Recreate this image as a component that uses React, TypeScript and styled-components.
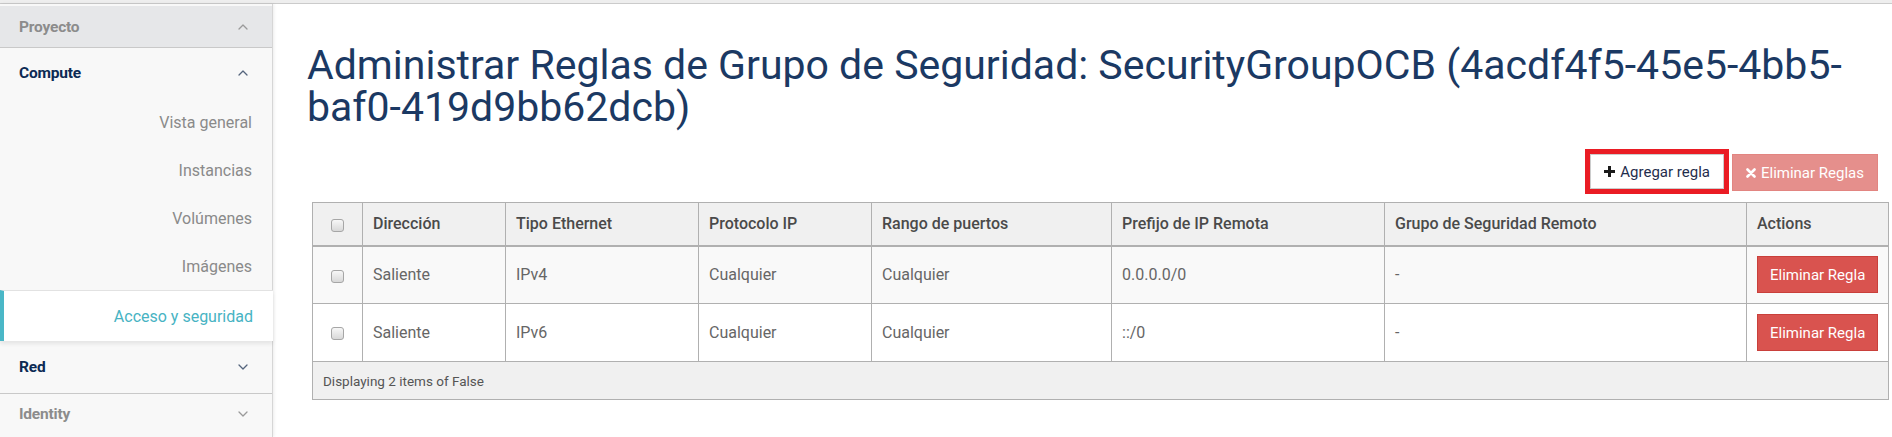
import React from "react";
import styled, { createGlobalStyle, css } from "styled-components";

const GlobalStyle = createGlobalStyle`
  html, body { margin: 0; padding: 0; background: #ffffff; }
  body {
    font-family: "Roboto", "Liberation Sans", sans-serif;
    color: #555555;
  }
  * { box-sizing: border-box; }
`;

const Page = styled.div`
  display: flex;
  flex-direction: column;
  width: 1892px;
  min-height: 437px;
`;

const TopStrip = styled.div`
  height: 4px;
  background: #eeeeee;
  border-bottom: 1px solid #cbcbcb;
`;

const Body = styled.div`
  display: flex;
  flex: 1;
  align-items: stretch;
`;

const Sidebar = styled.nav`
  width: 273px;
  flex: 0 0 273px;
  background: #f8f8f8;
  border-right: 1px solid #d6d6d6;
  box-shadow: 1px 0 3px rgba(0, 0, 0, 0.08);
  padding-top: 2px;
  display: flex;
  flex-direction: column;
  position: relative;
  z-index: 1;
`;

type Tone = "muted" | "dark";

const PanelHeader = styled.div<{ $tone: Tone; $shaded?: boolean; $height: number; $bordered?: boolean }>`
  display: flex;
  align-items: center;
  justify-content: space-between;
  height: ${(p) => p.$height}px;
  padding: 0 24px 0 19px;
  font-size: 15.5px;
  font-weight: 700;
  letter-spacing: -0.2px;
  color: ${(p) => (p.$tone === "dark" ? "#0c2a53" : "#8c8c8c")};
  background: ${(p) => (p.$shaded ? "#e6e7e9" : "transparent")};
  border-bottom: ${(p) => (p.$bordered ? "1px solid #c9c9c9" : "none")};
`;

const Chevron = styled.svg<{ $tone: Tone }>`
  width: 10px;
  height: 6px;
  color: ${(p) => (p.$tone === "dark" ? "#55657d" : "#9a9a9a")};
`;

const NavList = styled.ul`
  list-style: none;
  margin: 0;
  padding: 0;
`;

const NavItem = styled.li<{ $active?: boolean }>`
  height: 48px;
  display: flex;
  align-items: center;
  justify-content: flex-end;
  padding-right: 20px;
  font-size: 16px;
  color: #8a8a8a;
  ${(p) =>
    p.$active &&
    css`
      background: #ffffff;
      color: #47b3c3;
      border-left: 4px solid #4ab7c7;
      border-top: 1px solid #e2e2e2;
      margin-right: -1px;
      height: 51px;
      box-shadow: 0 3px 4px rgba(0, 0, 0, 0.08);
      position: relative;
    `}
`;

const Main = styled.main`
  flex: 1;
  padding: 0 3px 0 34px;
  display: flex;
  flex-direction: column;
`;

const Title = styled.h1`
  margin: 40px 0 0 0;
  font-size: 41px;
  line-height: 42px;
  font-weight: 400;
  color: #1b3963;
`;

const Toolbar = styled.div`
  display: flex;
  justify-content: flex-end;
  align-items: flex-start;
  gap: 8px;
  margin-top: 26px;
  padding-right: 11px;
`;

const ActionButton = styled.button<{ $variant: "default" | "danger-disabled"; $highlight?: boolean }>`
  display: inline-flex;
  align-items: center;
  gap: 5px;
  font-family: inherit;
  font-size: 15px;
  white-space: nowrap;
  padding: 0 13px;
  border-radius: 0;
  cursor: pointer;
  ${(p) =>
    p.$variant === "default"
      ? css`
          height: 35px;
          background: #ffffff;
          color: #1f2d4d;
          border: 1px solid #cccccc;
        `
      : css`
          height: 37px;
          background: #e58f8c;
          color: #ffffff;
          border: 1px solid #e28581;
        `}
  ${(p) =>
    p.$highlight &&
    css`
      outline: 5px solid #ea1c24;
      outline-offset: 0;
    `}
`;

const TableWrap = styled.div`
  margin: 11px 0 0 5px;
`;

const Table = styled.table`
  width: 100%;
  border-collapse: collapse;
  table-layout: fixed;
  border: 1px solid #b0b0b0;
`;

const HeadCell = styled.th`
  height: 43px;
  padding: 0 10px;
  background: #f0f0f0;
  border: 1px solid #b0b0b0;
  border-bottom: 2px solid #b0b0b0;
  text-align: left;
  font-size: 16px;
  font-weight: 500;
  color: #4a4a4a;
  vertical-align: middle;
`;

const Row = styled.tr<{ $striped?: boolean }>`
  background: ${(p) => (p.$striped ? "#f9f9f9" : "#ffffff")};
`;

const Cell = styled.td`
  height: 58px;
  padding: 0 10px;
  border: 1px solid #b0b0b0;
  font-size: 16px;
  color: #666666;
  vertical-align: middle;
`;

const CheckCell = styled(Cell)`
  text-align: center;
  padding: 0;
`;

const CheckHead = styled(HeadCell)`
  text-align: center;
  padding: 0;
`;

const Check = styled.input.attrs({ type: "checkbox" })`
  appearance: none;
  width: 13px;
  height: 13px;
  margin: 0;
  border: 1px solid #a6a6a6;
  border-radius: 3px;
  background: linear-gradient(#f7f7f7, #d8d8d8);
  vertical-align: middle;
  display: inline-block;
`;

const RowButton = styled.button`
  height: 37px;
  padding: 0 12px;
  font-family: inherit;
  font-size: 15px;
  white-space: nowrap;
  color: #ffffff;
  background: #d9534f;
  border: 1px solid #c9403b;
  border-radius: 0;
`;

const FooterCell = styled.td`
  height: 38px;
  padding: 0 10px;
  background: #f0f0f0;
  border: 1px solid #b0b0b0;
  font-size: 13.5px;
  color: #555555;
`;

const ChevronIcon = ({ dir, tone }: { dir: "up" | "down"; tone: Tone }) => (
  <Chevron $tone={tone} viewBox="0 0 10 6" fill="none">
    <polyline
      points={dir === "up" ? "1,5 5,1 9,5" : "1,1 5,5 9,1"}
      stroke="currentColor"
      strokeWidth="1.3"
      strokeLinecap="round"
      strokeLinejoin="round"
    />
  </Chevron>
);

const PlusIcon = () => (
  <svg width="11" height="11" viewBox="0 0 11 11">
    <rect x="4" y="0" width="3" height="11" fill="#1a1a1a" />
    <rect x="0" y="4" width="11" height="3" fill="#1a1a1a" />
  </svg>
);

const TimesIcon = () => (
  <svg width="10" height="10" viewBox="0 0 10 10">
    <path d="M1.5 1.5 L8.5 8.5 M8.5 1.5 L1.5 8.5" stroke="#ffffff" strokeWidth="2.6" strokeLinecap="round" />
  </svg>
);

const columns = [
  { label: "", width: 50 },
  { label: "Dirección", width: 143 },
  { label: "Tipo Ethernet", width: 193 },
  { label: "Protocolo IP", width: 173 },
  { label: "Rango de puertos", width: 240 },
  { label: "Prefijo de IP Remota", width: 273 },
  { label: "Grupo de Seguridad Remoto", width: 362 },
  { label: "Actions", width: 142 },
];

const rules = [
  { dir: "Saliente", eth: "IPv4", proto: "Cualquier", range: "Cualquier", prefix: "0.0.0.0/0", group: "-" },
  { dir: "Saliente", eth: "IPv6", proto: "Cualquier", range: "Cualquier", prefix: "::/0", group: "-" },
];

const navItems = ["Vista general", "Instancias", "Volúmenes", "Imágenes", "Acceso y seguridad"];

export default function App() {
  return (
    <>
      <GlobalStyle />
      <Page>
        <TopStrip />
        <Body>
          <Sidebar>
            <PanelHeader $tone="muted" $shaded $bordered $height={42}>
              Proyecto <ChevronIcon dir="up" tone="muted" />
            </PanelHeader>
            <PanelHeader $tone="dark" $height={50}>
              Compute <ChevronIcon dir="up" tone="dark" />
            </PanelHeader>
            <NavList>
              {navItems.map((item) => (
                <NavItem key={item} $active={item === "Acceso y seguridad"}>
                  {item}
                </NavItem>
              ))}
            </NavList>
            <PanelHeader $tone="dark" $bordered $height={53}>
              Red <ChevronIcon dir="down" tone="dark" />
            </PanelHeader>
            <PanelHeader $tone="muted" $height={40}>
              Identity <ChevronIcon dir="down" tone="muted" />
            </PanelHeader>
          </Sidebar>
          <Main>
            <Title>
              Administrar Reglas de Grupo de Seguridad: SecurityGroupOCB (4acdf4f5-45e5-4bb5-baf0-419d9bb62dcb)
            </Title>
            <Toolbar>
              <ActionButton $variant="default" $highlight>
                <PlusIcon /> Agregar regla
              </ActionButton>
              <ActionButton $variant="danger-disabled">
                <TimesIcon /> Eliminar Reglas
              </ActionButton>
            </Toolbar>
            <TableWrap>
              <Table>
                <colgroup>
                  {columns.map((c, i) => (
                    <col key={i} style={{ width: c.width }} />
                  ))}
                </colgroup>
                <thead>
                  <tr>
                    <CheckHead>
                      <Check />
                    </CheckHead>
                    {columns.slice(1).map((c) => (
                      <HeadCell key={c.label}>{c.label}</HeadCell>
                    ))}
                  </tr>
                </thead>
                <tbody>
                  {rules.map((r, i) => (
                    <Row key={i} $striped={i === 0}>
                      <CheckCell>
                        <Check />
                      </CheckCell>
                      <Cell>{r.dir}</Cell>
                      <Cell>{r.eth}</Cell>
                      <Cell>{r.proto}</Cell>
                      <Cell>{r.range}</Cell>
                      <Cell>{r.prefix}</Cell>
                      <Cell>{r.group}</Cell>
                      <Cell>
                        <RowButton>Eliminar Regla</RowButton>
                      </Cell>
                    </Row>
                  ))}
                </tbody>
                <tfoot>
                  <tr>
                    <FooterCell colSpan={8}>Displaying 2 items of False</FooterCell>
                  </tr>
                </tfoot>
              </Table>
            </TableWrap>
          </Main>
        </Body>
      </Page>
    </>
  );
}
